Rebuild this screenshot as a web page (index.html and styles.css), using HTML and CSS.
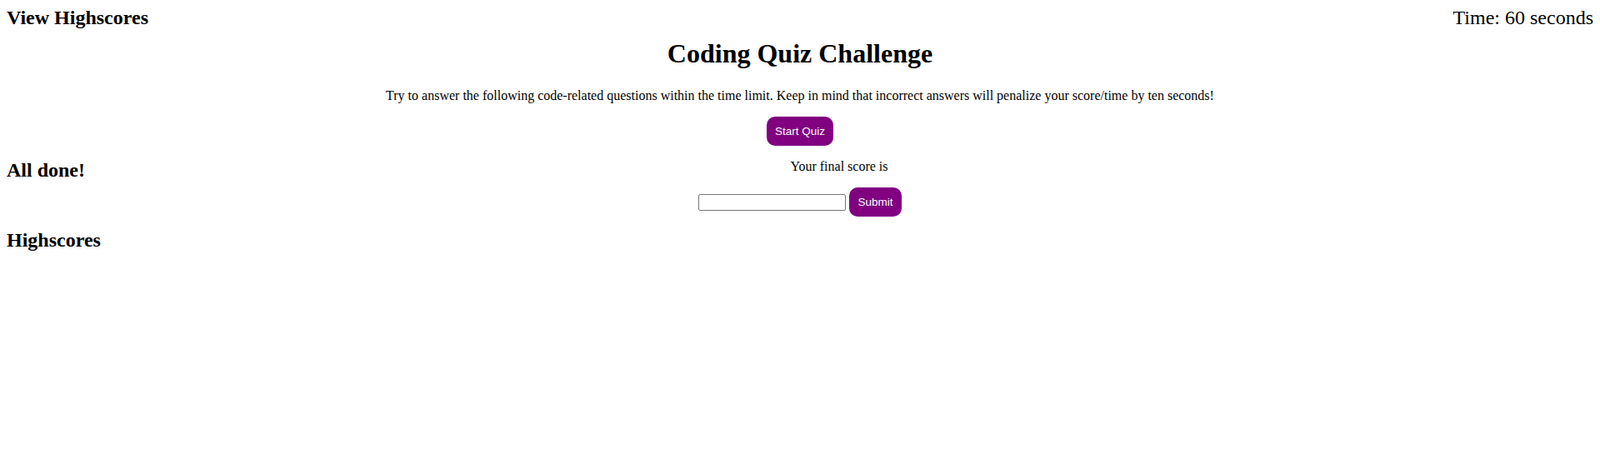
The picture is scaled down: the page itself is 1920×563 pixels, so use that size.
FILE: index.html
```html
<!DOCTYPE html>
<html lang="en">
<head>
<meta charset="utf-8">
<title>Coding Quiz Challenge</title>
<link rel="stylesheet" href="styles.css">
</head>
<body>
  <header class="top-bar">
    <h2 class="view-link">View Highscores</h2>
    <span class="timer">Time: 60 seconds</span>
  </header>

  <section class="intro">
    <h1 class="title">Coding Quiz Challenge</h1>
    <p class="intro-text">Try to answer the following code-related questions within the time limit. Keep in mind that incorrect answers will penalize your score/time by ten seconds!</p>
    <div class="start-wrap"><button class="btn">Start Quiz</button></div>
  </section>

  <section class="done">
    <h2 class="done-title">All done!</h2>
    <p class="final-score">Your final score is</p>
    <div class="submit-row"><input type="text" class="initials"> <button class="btn">Submit</button></div>
  </section>

  <section class="scores">
    <h2 class="scores-title">Highscores</h2>
  </section>
</body>
</html>
```
FILE: styles.css
```css
html, body {
  background: #ffffff;
}
body {
  margin: 8px;
  font-family: "Liberation Serif", "Times New Roman", serif;
  font-size: 16px;
  color: #000000;
}
.top-bar {
  display: flex;
  justify-content: space-between;
  align-items: baseline;
}
.view-link {
  margin: 0;
  font-size: 24px;
  font-weight: bold;
}
.timer {
  font-size: 24px;
}
.intro {
  text-align: center;
}
.title {
  font-size: 32px;
  margin: 11px 0 23px;
}
.intro-text {
  margin: 16px 0;
}
.start-wrap {
  margin-top: 16px;
}
.btn {
  font-family: "Liberation Sans", Arial, sans-serif;
  font-size: 13.5px;
  background: #800080;
  color: #ffffff;
  border: none;
  border-radius: 10px;
  padding: 10px;
  cursor: pointer;
}
.done {
  padding-top: 16px;
}
.done-title {
  float: left;
  margin: 0;
  font-size: 24px;
}
.final-score {
  margin: 0 0 16px;
  text-align: center;
}
.submit-row {
  text-align: center;
}
.initials {
  font-family: "Liberation Sans", Arial, sans-serif;
  font-size: 13.333px;
  width: 177px;
  box-sizing: border-box;
  height: 20px;
  border: 1px solid #767676;
  padding: 1px 2px;
  border-radius: 2px;
}
.scores-title {
  clear: both;
  margin: 15px 0 0;
  font-size: 24px;
}
```
